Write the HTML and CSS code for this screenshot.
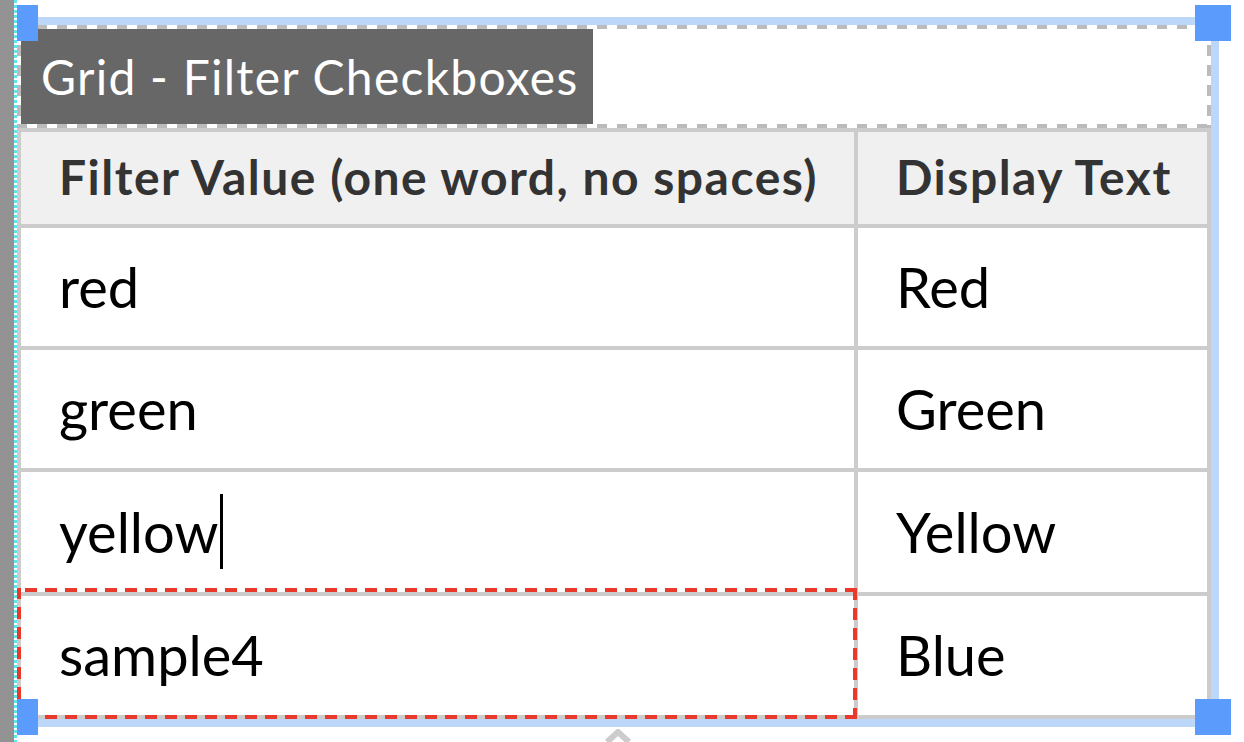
FILE: index.html
```html
<!DOCTYPE html>
<html lang="en">
<head>
<meta charset="utf-8">
<title>Grid - Filter Checkboxes</title>
<link rel="stylesheet" href="styles.css">
</head>
<body>
<div class="canvas">
  <div class="gutter"></div>
  <div class="guide"></div>
  <div class="stage">
    <div class="component">
      <div class="titlebar">
        <div class="label">Grid - Filter Checkboxes</div>
      </div>
      <table class="grid">
        <thead>
          <tr class="head-row">
            <th class="c1">Filter Value (one word, no spaces)</th>
            <th class="c2">Display Text</th>
          </tr>
        </thead>
        <tbody>
          <tr class="row r1"><td>red</td><td>Red</td></tr>
          <tr class="row r2"><td>green</td><td>Green</td></tr>
          <tr class="row r3"><td>yellow<span class="caret"></span></td><td>Yellow</td></tr>
          <tr class="row r4"><td class="selected-cell">sample4<span class="cell-outline"></span></td><td>Blue</td></tr>
        </tbody>
      </table>
    </div>
    <div class="more">
      <svg width="26" height="14" viewBox="0 0 26 14"><polyline points="2,13 13,3 24,13" fill="none" stroke="#cccccc" stroke-width="6"/></svg>
    </div>
    <span class="handle h-tl"></span>
    <span class="handle h-tr"></span>
    <span class="handle h-bl"></span>
    <span class="handle h-br"></span>
  </div>
</div>
</body>
</html>
```

FILE: styles.css
```css
html, body {
  margin: 0;
  padding: 0;
  background: #ffffff;
}
body {
  font-family: Lato, "Open Sans", sans-serif;
  overflow: hidden;
}
.canvas {
  display: flex;
  width: 1244px;
  height: 742px;
}
.gutter {
  width: 14px;
  flex: none;
  background: #939393;
  position: relative;
  z-index: 3;
}
.guide {
  width: 3px;
  flex: none;
  background: repeating-linear-gradient(to bottom, #5ce6ee 0 3px, #ffffff 3px 5px);
  position: relative;
  z-index: 3;
}
.stage {
  flex: 1;
  position: relative;
  padding-top: 17px;
}
.component {
  width: 1194px;
  border: 8px solid #bdd7fb;
  border-left: 0;
}
.titlebar {
  height: 95px;
  padding: 4px;
  background:
    repeating-linear-gradient(90deg, #bbbbbb 0 10px, transparent 10px 20px) left top / 100% 4px no-repeat,
    repeating-linear-gradient(90deg, #bbbbbb 0 10px, transparent 10px 20px) left bottom / 100% 4px no-repeat,
    repeating-linear-gradient(180deg, #bbbbbb 0 11px, transparent 11px 20px) left top / 4px 100% no-repeat,
    repeating-linear-gradient(180deg, #bbbbbb 0 11px, transparent 11px 20px) right top / 4px 100% no-repeat;
}
.label {
  display: inline-block;
  height: 95px;
  line-height: 95px;
  padding: 0 14px 0 20px;
  background: #676767;
  color: #ffffff;
  font-size: 48px;
  letter-spacing: 1.25px;
  white-space: nowrap;
}
.grid {
  width: 1194px;
  table-layout: fixed;
  border-collapse: separate;
  border-spacing: 0;
  border-top: 4px solid #cccccc;
  border-left: 4px solid #cccccc;
}
.grid th, .grid td {
  box-sizing: border-box;
  border-right: 4px solid #cccccc;
  border-bottom: 4px solid #cccccc;
  padding: 0 0 0 38px;
  text-align: left;
  white-space: nowrap;
}
.grid .c1 { width: 837px; }
.grid .c2 { width: 353px; }
.head-row th {
  height: 96px;
  background: #f0f0f0;
  color: #333333;
  font-weight: 700;
  font-size: 48px;
  letter-spacing: 1.5px;
  padding-bottom: 4px;
}
.row td {
  color: #000000;
  font-size: 56px;
  font-weight: 400;
  padding-bottom: 2px;
}
.r1 td, .r2 td { height: 122px; }
.r3 td { height: 124px; }
.r4 td { height: 123px; }
.caret {
  display: inline-block;
  width: 3px;
  height: 75px;
  margin-left: 2px;
  background: #000000;
  vertical-align: -16px;
}
.selected-cell {
  position: relative;
}
.cell-outline {
  position: absolute;
  left: -4px;
  top: -8px;
  width: 840px;
  height: 131px;
  pointer-events: none;
  background:
    repeating-linear-gradient(270deg, #e8392b 0 12px, transparent 12px 20px) right top / 100% 4px no-repeat,
    repeating-linear-gradient(270deg, #e8392b 0 12px, transparent 12px 20px) right bottom / 100% 4px no-repeat,
    repeating-linear-gradient(180deg, #e8392b 0 12px, transparent 12px 20px) right top / 4px 100% no-repeat,
    repeating-linear-gradient(0deg, #e8392b 0 12px, transparent 12px 20px) left bottom / 4px 100% no-repeat;
}
.more {
  display: flex;
  justify-content: center;
  width: 1202px;
  margin-top: 2px;
}
.more svg { display: block; }
.handle {
  position: absolute;
  width: 36px;
  height: 36px;
  background: #5a9bfb;
  z-index: 2;
}
.h-tl { left: -15px; top: 5px; }
.h-tr { left: 1178px; top: 5px; }
.h-bl { left: -15px; top: 699px; }
.h-br { left: 1178px; top: 699px; }
```
